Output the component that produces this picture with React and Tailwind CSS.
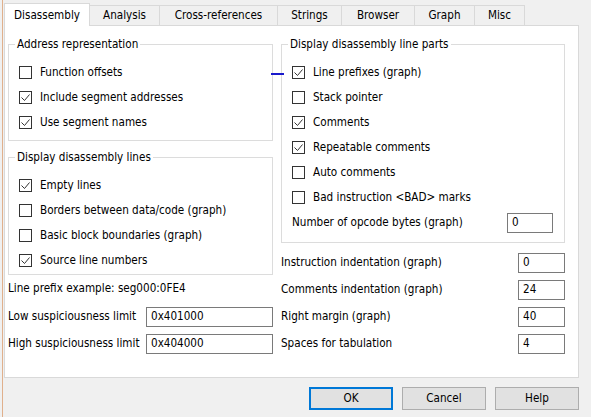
function Check({ label, checked }) {
  return (
    <div className="flex h-[25px] items-center gap-[8px]">
      <span className="flex h-[13px] w-[13px] shrink-0 items-center justify-center border border-[#333333] bg-white">
        {checked && (
          <svg width="11" height="11" viewBox="0 0 11 11">
            <path d="M1.5 5.5L4.5 8.5L9.5 2.5" fill="none" stroke="#333333" strokeWidth="1" />
          </svg>
        )}
      </span>
      <span className="whitespace-nowrap">{label}</span>
    </div>
  )
}

function Field({ value, className }) {
  return (
    <div className={"flex h-[20px] shrink-0 items-center border border-[#7a7a7a] bg-white pl-[4px] " + className}>
      {value}
    </div>
  )
}

function Group({ title, children, className }) {
  return (
    <fieldset className={"border border-[#dcdcdc] px-[10px] pt-[8px] " + className}>
      <legend className="ml-[-4px] px-[2px] leading-[15px]">{title}</legend>
      {children}
    </fieldset>
  )
}

const tabs = [
  ["Disassembly", "w-[86px]"],
  ["Analysis", "w-[70px]"],
  ["Cross-references", "w-[118px]"],
  ["Strings", "w-[64px]"],
  ["Browser", "w-[73px]"],
  ["Graph", "w-[60px]"],
  ["Misc", "w-[50px]"],
]

export default function App() {
  return (
    <div className="h-[417px] w-[591px] overflow-hidden bg-[#f0f0f0] pl-[2px] font-['DejaVu_Sans_Condensed','Liberation_Sans',sans-serif] text-[11.6px] text-black">
      <div className="h-full border-l border-[#e0b08c] pl-[1px]">
        {/* tab strip */}
        <div className="flex h-[25px] items-end">
          {tabs.map(([name, w], i) =>
            i === 0 ? (
              <div
                key={name}
                className={"relative z-10 -mb-px flex h-[23px] items-center justify-center border border-b-0 border-[#d9d9d9] bg-white pt-[1px] " + w}
              >
                {name}
              </div>
            ) : (
              <div
                key={name}
                className={"flex h-[20px] items-center justify-center border border-b-0 border-l-0 border-[#d9d9d9] bg-[#f0f0f0] pt-[1px] " + w}
              >
                {name}
              </div>
            )
          )}
        </div>

        {/* page */}
        <div className="relative h-[353px] w-[575px] border border-[#d9d9d9] bg-white px-[3px] pt-[11px]">
          <div className="flex gap-[8px]">
            {/* left column */}
            <div className="flex w-[265px] flex-col">
              <Group title="Address representation" className="pb-[5px]">
                <Check label="Function offsets" />
                <Check label="Include segment addresses" checked />
                <Check label="Use segment names" checked />
              </Group>
              <Group title="Display disassembly lines" className="mt-[9px] pb-[1px]">
                <Check label="Empty lines" checked />
                <Check label="Borders between data/code (graph)" />
                <Check label="Basic block boundaries (graph)" />
                <Check label="Source line numbers" checked />
              </Group>
              <div className="flex h-[28px] items-center">Line prefix example: seg000:0FE4</div>
              <div className="flex h-[27px] items-center justify-between">
                <span>Low suspiciousness limit</span>
                <Field value="0x401000" className="w-[127px]" />
              </div>
              <div className="flex h-[27px] items-center justify-between">
                <span>High suspiciousness limit</span>
                <Field value="0x404000" className="w-[127px]" />
              </div>
            </div>

            {/* right column */}
            <div className="relative flex w-[284px] flex-col">
              <div className="absolute left-[-10px] top-[36px] h-[2px] w-[13px] bg-[#1a1acc]" />
              <Group title="Display disassembly line parts" className="pb-[7px]">
                <Check label="Line prefixes (graph)" checked />
                <Check label="Stack pointer" />
                <Check label="Comments" checked />
                <Check label="Repeatable comments" checked />
                <Check label="Auto comments" />
                <Check label="Bad instruction <BAD> marks" />
                <div className="flex h-[25px] items-center justify-between pr-[1px]">
                  <span>Number of opcode bytes (graph)</span>
                  <Field value="0" className="w-[46px]" />
                </div>
              </Group>
              <div className="mt-[6px] flex flex-col">
                {[
                  ["Instruction indentation (graph)", "0"],
                  ["Comments indentation (graph)", "24"],
                  ["Right margin (graph)", "40"],
                  ["Spaces for tabulation", "4"],
                ].map(([label, v]) => (
                  <div key={label} className="flex h-[27px] items-center justify-between">
                    <span>{label}</span>
                    <Field value={v} className="w-[47px]" />
                  </div>
                ))}
              </div>
            </div>
          </div>
        </div>

        {/* buttons */}
        <div className="mt-[9px] flex w-[575px] justify-end gap-[9px]">
          <button className="h-[23px] w-[84px] border border-[#0078d7] bg-[#e1e1e1] shadow-[inset_0_0_0_1px_#0078d7]">OK</button>
          <button className="h-[23px] w-[84px] border border-[#adadad] bg-[#e1e1e1]">Cancel</button>
          <button className="h-[23px] w-[84px] border border-[#adadad] bg-[#e1e1e1]">Help</button>
        </div>
      </div>
    </div>
  )
}
